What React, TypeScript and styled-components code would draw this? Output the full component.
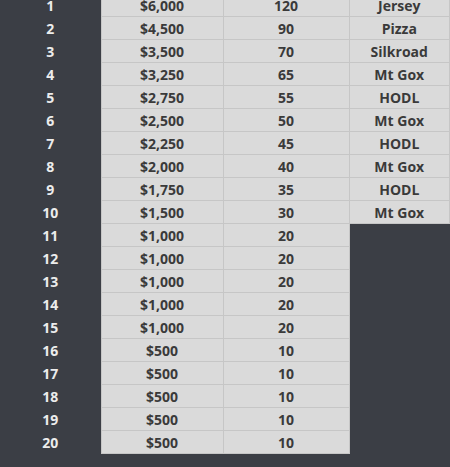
import React from "react";
import styled, { createGlobalStyle } from "styled-components";

const Global = createGlobalStyle`
  html, body { margin: 0; padding: 0; background: #3b3e45; overflow: hidden; }
  body { font-family: "Open Sans", "DejaVu Sans", sans-serif; }
`;

const Page = styled.div`
  width: 450px;
  height: 467px;
  background: #3b3e45;
  overflow: hidden;
`;

const Table = styled.table`
  margin-top: -7px;
  width: 450px;
  border-collapse: collapse;
  table-layout: fixed;
  font-size: 14px;
  font-weight: 700;
`;

const Rank = styled.td`
  height: 22px;
  padding: 0;
  text-align: center;
  color: #ececec;
  background: transparent;
`;

const Cell = styled.td<{ $filled?: boolean }>`
  height: 22px;
  padding: 0;
  text-align: center;
  color: #3a3a3a;
  background: ${(p) => (p.$filled ? "#dadada" : "transparent")};
  border: ${(p) => (p.$filled ? "1px solid #c6c6c6" : "none")};
`;

const rows: [string, string, string?][] = [
  ["$6,000", "120", "Jersey"],
  ["$4,500", "90", "Pizza"],
  ["$3,500", "70", "Silkroad"],
  ["$3,250", "65", "Mt Gox"],
  ["$2,750", "55", "HODL"],
  ["$2,500", "50", "Mt Gox"],
  ["$2,250", "45", "HODL"],
  ["$2,000", "40", "Mt Gox"],
  ["$1,750", "35", "HODL"],
  ["$1,500", "30", "Mt Gox"],
  ["$1,000", "20"],
  ["$1,000", "20"],
  ["$1,000", "20"],
  ["$1,000", "20"],
  ["$1,000", "20"],
  ["$500", "10"],
  ["$500", "10"],
  ["$500", "10"],
  ["$500", "10"],
  ["$500", "10"],
];

export default function App() {
  return (
    <Page>
      <Global />
      <Table>
        <colgroup>
          <col style={{ width: 101 }} />
          <col style={{ width: 122 }} />
          <col style={{ width: 126 }} />
          <col />
        </colgroup>
        <tbody>
          {rows.map(([prize, n, tag], i) => (
            <tr key={i}>
              <Rank>{i + 1}</Rank>
              <Cell $filled>{prize}</Cell>
              <Cell $filled>{n}</Cell>
              <Cell $filled={!!tag}>{tag ?? ""}</Cell>
            </tr>
          ))}
        </tbody>
      </Table>
    </Page>
  );
}
